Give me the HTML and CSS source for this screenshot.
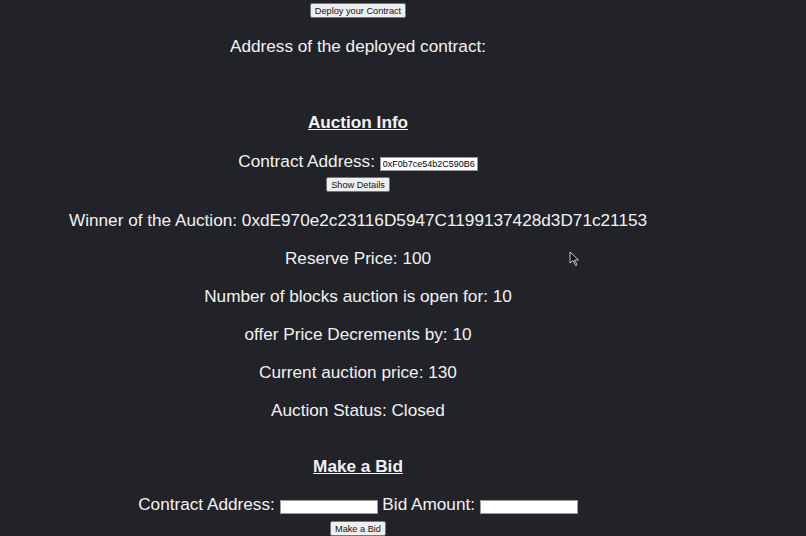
FILE: index.html
```html
<!DOCTYPE html>
<html>
<head>
<meta charset="utf-8">
<link rel="stylesheet" href="styles.css">
</head>
<body>
<div class="app">
  <div class="deploy"><button class="btn">Deploy your Contract</button></div>
  <p class="line deployed">Address of the deployed contract:</p>

  <h2 class="heading info">Auction Info</h2>
  <div class="row addr-row">Contract Address: <input class="field filled" type="text" value="0xF0b7ce54b2C590B67a1D"></div>
  <div class="details"><button class="btn">Show Details</button></div>
  <p class="line winner">Winner of the Auction: 0xdE970e2c23116D5947C1199137428d3D71c21153</p>
  <p class="line">Reserve Price: 100</p>
  <p class="line">Number of blocks auction is open for: 10</p>
  <p class="line">offer Price Decrements by: 10</p>
  <p class="line">Current auction price: 130</p>
  <p class="line">Auction Status: Closed</p>

  <h2 class="heading bid">Make a Bid</h2>
  <div class="row bid-row">Contract Address: <input class="field" type="text"> Bid Amount: <input class="field" type="text"></div>
  <div class="bid-btn"><button class="btn">Make a Bid</button></div>
</div>
<svg class="cursor" width="12" height="16" viewBox="0 0 12 16"><path d="M1 1 L1 12 L4 9.5 L6.5 14.5 L8 13.8 L5.6 9 L9.5 9 Z" fill="#111" stroke="#c9ccd4" stroke-width="1"/></svg>
</body>
</html>
```
FILE: styles.css
```css
html, body {
  margin: 0;
  padding: 0;
  background: #222329;
  height: 100%;
  overflow: hidden;
}
.app {
  width: 716px;
  text-align: center;
  color: #f2f2f2;
  font-family: "Liberation Sans", Arial, sans-serif;
  font-size: 17.2px;
  line-height: 20px;
}
.btn {
  display: block;
  margin: 0 auto;
  font-family: "Liberation Sans", Arial, sans-serif;
  font-size: 9.2px;
  line-height: 12px;
  height: 15px;
  padding: 0 4px;
  background: #efefef;
  color: #111;
  border: 1px solid #767676;
  border-radius: 2px;
}
.deploy { padding-top: 3px; height: 16px; }
.line { margin: 18px 0 0; }
.deployed { margin-top: 17px; }
.heading {
  margin: 56px 0 0;
  font-size: 17.2px;
  line-height: 20px;
  font-weight: bold;
  text-decoration: underline;
}
.heading.bid { margin-top: 36px; }
.row { margin-top: 19px; height: 20px; }
.bid-row { margin-top: 18px; }
.field {
  width: 98px;
  height: 14px;
  box-sizing: border-box;
  border: 1px solid #999;
  background: #fff;
  padding: 0 2px;
  font-family: "Liberation Sans", Arial, sans-serif;
  font-size: 9px;
  color: #000;
  vertical-align: 0;
}
.details { margin-top: 6px; height: 15px; }
.bid-btn { margin-top: 7px; }
.cursor { position: absolute; left: 569px; top: 251px; }
```
